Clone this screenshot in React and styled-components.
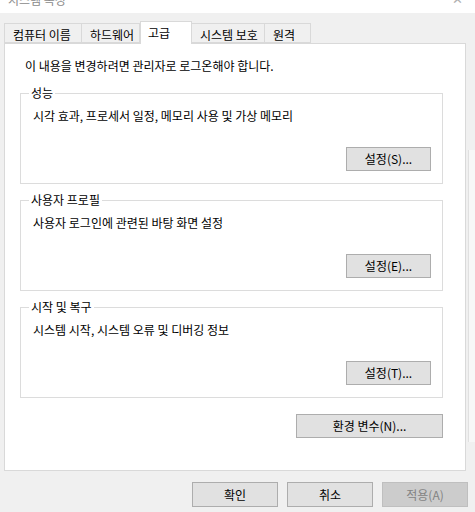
import React from 'react';
import styled, { createGlobalStyle } from 'styled-components';

const GlobalStyle = createGlobalStyle`
  html, body {
    margin: 0;
    padding: 0;
    background: #f0f0f0;
  }
  body {
    font-family: "Noto Sans CJK KR", "Noto Sans", sans-serif;
    font-size: 12px;
    color: #000;
  }
`;

const Window = styled.div`
  width: 475px;
  height: 512px;
  background: #f0f0f0;
  overflow: hidden;
  display: flex;
  flex-direction: column;
`;

const TitleBar = styled.div`
  height: 13px;
  flex-shrink: 0;
  background: #fff;
  display: flex;
  justify-content: space-between;
  overflow: hidden;
  padding: 0 12px 0 8px;
`;

const Title = styled.span`
  margin-top: -8px;
  line-height: 16px;
  color: #8a8a8a;
`;

const Close = styled.span`
  margin-top: -9px;
  line-height: 16px;
  font-size: 13px;
  color: #b0b0b0;
`;

const Body = styled.div`
  display: flex;
  flex: 1;
`;

const Main = styled.div`
  width: 468px;
  display: flex;
  flex-direction: column;
`;

const Edge = styled.div`
  flex: 1;
  margin: 137px 0 70px 0;
  background: #f7f7f7;
  border-left: 1px solid #e0e0e0;
`;

const TabRow = styled.div`
  display: flex;
  align-items: flex-end;
  height: 22px;
  margin: 8px 0 0 4px;
`;

const Tab = styled.div`
  box-sizing: border-box;
  width: ${p => p.$w}px;
  height: ${p => (p.$active ? 23 : 20)}px;
  margin-bottom: ${p => (p.$active ? -1 : 0)}px;
  padding: ${p => (p.$active ? '3px 0 0 7px' : '3px 0 0 8px')};
  line-height: 16px;
  white-space: nowrap;
  background: ${p => (p.$active ? '#fff' : '#f0f0f0')};
  border: 1px solid #d9d9d9;
  border-bottom: ${p => (p.$active ? 'none' : '1px solid #d9d9d9')};
  border-left: ${p => (p.$first || p.$active ? '1px solid #d9d9d9' : 'none')};
  position: relative;
  z-index: ${p => (p.$active ? 1 : 0)};
`;

const Panel = styled.div`
  box-sizing: border-box;
  width: 462px;
  height: 428px;
  margin-left: 4px;
  background: #fff;
  border: 1px solid #d9d9d9;
  padding: 14px 22px 0 15px;
  display: flex;
  flex-direction: column;
`;

const Notice = styled.div`
  line-height: 16px;
  padding-left: 5px;
  margin-bottom: 19px;
`;

const Group = styled.div`
  position: relative;
  box-sizing: border-box;
  height: 91px;
  border: 1px solid #dcdcdc;
  padding: 14px 11px 12px 12px;
  margin-bottom: 16px;
  display: flex;
  flex-direction: column;
  justify-content: space-between;
`;

const Legend = styled.span`
  position: absolute;
  top: -9px;
  left: 8px;
  padding: 0 2px;
  background: #fff;
  line-height: 16px;
`;

const GroupText = styled.div`
  line-height: 16px;
`;

const Button = styled.button`
  box-sizing: border-box;
  width: ${p => p.$w || 85}px;
  height: ${p => p.$h || 24}px;
  padding: 0;
  font-family: inherit;
  font-size: 12px;
  line-height: 16px;
  color: ${p => (p.disabled ? '#838383' : '#000')};
  background: ${p => (p.disabled ? '#cccccc' : '#e1e1e1')};
  border: 1px solid ${p => (p.disabled ? '#bfbfbf' : '#adadad')};
  border-radius: 0;
  align-self: flex-end;
`;

const EnvRow = styled.div`
  display: flex;
  justify-content: flex-end;
`;

const Footer = styled.div`
  display: flex;
  justify-content: flex-end;
  gap: 9px;
  padding: 11px 0 0 0;
`;

const tabs = [
  { label: '컴퓨터 이름', w: 78 },
  { label: '하드웨어', w: 58 },
  { label: '고급', w: 52, active: true },
  { label: '시스템 보호', w: 73 },
  { label: '원격', w: 46 },
];

const groups = [
  { title: '성능', text: '시각 효과, 프로세서 일정, 메모리 사용 및 가상 메모리', btn: '설정(S)...' },
  { title: '사용자 프로필', text: '사용자 로그인에 관련된 바탕 화면 설정', btn: '설정(E)...' },
  { title: '시작 및 복구', text: '시스템 시작, 시스템 오류 및 디버깅 정보', btn: '설정(T)...' },
];

const App = () => {
  return (
    <Window>
      <GlobalStyle />
      <TitleBar>
        <Title>시스템 속성</Title>
        <Close>✕</Close>
      </TitleBar>
      <Body>
        <Main>
          <TabRow>
            {tabs.map((t, i) => (
              <Tab key={t.label} $w={t.w} $active={t.active} $first={i === 0}>
                {t.label}
              </Tab>
            ))}
          </TabRow>
          <Panel>
            <Notice>이 내용을 변경하려면 관리자로 로그온해야 합니다.</Notice>
            {groups.map(g => (
              <Group key={g.title}>
                <Legend>{g.title}</Legend>
                <GroupText>{g.text}</GroupText>
                <Button>{g.btn}</Button>
              </Group>
            ))}
            <EnvRow>
              <Button $w={147}>환경 변수(N)...</Button>
            </EnvRow>
          </Panel>
          <Footer>
            <Button $w={86} $h={25}>확인</Button>
            <Button $w={86} $h={25}>취소</Button>
            <Button $w={86} $h={25} disabled>적용(A)</Button>
          </Footer>
        </Main>
        <Edge />
      </Body>
    </Window>
  );
};

export default App;
